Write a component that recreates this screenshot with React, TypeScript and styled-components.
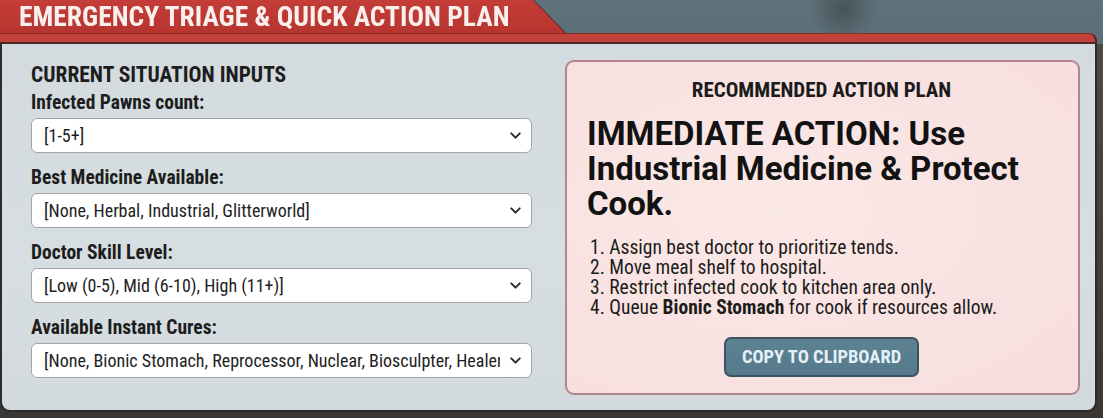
import React from "react";
import styled, { createGlobalStyle } from "styled-components";
import { ChevronDown } from "lucide-react";

const Global = createGlobalStyle`
  html, body { margin: 0; padding: 0; }
  body {
    width: 1103px;
    height: 418px;
    overflow: hidden;
    background: #3b3734;
    font-family: "Roboto Condensed", "Liberation Sans Narrow", sans-serif;
  }
`;

const narrow = `"Roboto Condensed", "Liberation Sans Narrow", "DejaVu Sans Condensed", sans-serif`;

const Page = styled.div`
  width: 1103px;
  height: 418px;
  display: flex;
  flex-direction: column;
  background:
    radial-gradient(ellipse 34px 34px at 843px 8px, rgba(45, 55, 60, 0.5), rgba(45, 55, 60, 0) 100%),
    linear-gradient(180deg, #5f7179 0px, #5c6e76 44px, #4b4a47 44px, #3b3734 418px);
`;

const Header = styled.div`
  width: 1097px;
  display: flex;
  flex-direction: column;
`;

const TabWrap = styled.div`
  height: 33px;
  filter: drop-shadow(1.5px 0 0 #4b2424);
`;

const Tab = styled.div`
  width: 566px;
  height: 33px;
  background: linear-gradient(180deg, #c43d38 0%, #b6342f 100%);
  clip-path: polygon(0 0, 533px 0, 565px 33px, 0 33px);
  display: flex;
  align-items: center;
  padding-left: 19px;
  box-sizing: border-box;
`;

const Title = styled.h1`
  margin: 0;
  font-family: ${narrow};
  font-weight: 700;
  font-size: 27.5px;
  line-height: 32px;
  color: #fbefed;
`;

const Strip = styled.div`
  height: 8px;
  background: #c1413b;
  border-top: 1px solid #8a2c2a;
  border-bottom: 2px solid #4e2826;
  border-right: 2px solid #4e2826;
  border-top-right-radius: 8px;
`;

const Body = styled.div`
  width: 1097px;
  height: 368px;
  box-sizing: border-box;
  background: linear-gradient(180deg, #d3dbde 0%, #d6dee1 60%, #d2dadd 100%);
  border-left: 2px solid #2e2b29;
  border-right: 2px solid #2e2b29;
  border-bottom: 2px solid #2e2b29;
  border-bottom-left-radius: 10px;
  border-bottom-right-radius: 10px;
  display: grid;
  grid-template-columns: 501px 515px;
  column-gap: 33px;
  padding: 16px 0 0 29px;
`;

const Inputs = styled.section`
  display: flex;
  flex-direction: column;
  padding-top: 3px;
`;

const SectionTitle = styled.h2`
  margin: 0 0 5px;
  font-family: ${narrow};
  font-weight: 700;
  font-size: 21.5px;
  line-height: 24px;
  color: #1d1d1d;
`;

const Fields = styled.div`
  display: flex;
  flex-direction: column;
  gap: 14px;
`;

const Field = styled.label`
  display: flex;
  flex-direction: column;
  gap: 4px;
`;

const LabelText = styled.span`
  font-family: ${narrow};
  font-weight: 700;
  font-size: 19.5px;
  line-height: 22px;
  color: #1d1d1d;
`;

const SelectWrap = styled.div`
  position: relative;
  height: 35px;
`;

const Select = styled.select`
  appearance: none;
  width: 100%;
  height: 35px;
  box-sizing: border-box;
  border: 1.5px solid #a3a6a8;
  border-radius: 6px;
  background: #ffffff;
  padding: 0 31px 0 12px;
  font-family: ${narrow};
  font-size: 18px;
  color: #1e1e1e;
  outline: none;
`;

const Chevron = styled(ChevronDown)`
  position: absolute;
  right: 8px;
  top: 9px;
  pointer-events: none;
  color: #2c2c2c;
`;

const Plan = styled.section`
  height: 335px;
  box-sizing: border-box;
  border: 2px solid #b3858a;
  border-radius: 9px;
  background: radial-gradient(ellipse at 40% 45%, #fbe9e7 0%, #f8e2e1 60%, #f6dedd 100%);
  display: flex;
  flex-direction: column;
  padding: 16px 22px 0 20px;
`;

const PlanTitle = styled.h3`
  margin: 0;
  text-align: center;
  font-family: ${narrow};
  font-weight: 700;
  font-size: 21px;
  line-height: 24px;
  color: #1b1b1b;
`;

const Headline = styled.p`
  margin: 14px 0 0;
  font-family: "Roboto", "Liberation Sans", sans-serif;
  font-weight: 700;
  font-size: 33px;
  line-height: 35px;
  color: #121212;
`;

const Steps = styled.ol`
  margin: 17px 0 0;
  padding: 0 0 0 3px;
  list-style: none;
  counter-reset: step;
  font-family: ${narrow};
  font-size: 19.5px;
  line-height: 20px;
  color: #1c1c1c;
`;

const Step = styled.li`
  counter-increment: step;
  &::before {
    content: counter(step) ". ";
  }
  b { font-weight: 700; }
`;

const ButtonRow = styled.div`
  display: flex;
  justify-content: center;
  margin-top: 19px;
`;

const CopyButton = styled.button`
  width: 195px;
  height: 40px;
  box-sizing: border-box;
  border: 2px solid #3b5361;
  border-radius: 7px;
  background: linear-gradient(180deg, #5d8294 0%, #557a8c 100%);
  color: #e4f0f6;
  font-family: ${narrow};
  font-weight: 700;
  font-size: 18.5px;
  cursor: pointer;
`;

const fields = [
  { label: "Infected Pawns count:", value: "[1-5+]" },
  { label: "Best Medicine Available:", value: "[None, Herbal, Industrial, Glitterworld]" },
  { label: "Doctor Skill Level:", value: "[Low (0-5), Mid (6-10), High (11+)]" },
  {
    label: "Available Instant Cures:",
    value: "[None, Bionic Stomach, Reprocessor, Nuclear, Biosculpter, Healer Mech Serum]",
  },
];

export default function App() {
  return (
    <>
      <Global />
      <Page>
        <Header>
          <TabWrap>
            <Tab>
              <Title>EMERGENCY TRIAGE &amp; QUICK ACTION PLAN</Title>
            </Tab>
          </TabWrap>
          <Strip />
        </Header>
        <Body>
          <Inputs>
            <SectionTitle>CURRENT SITUATION INPUTS</SectionTitle>
            <Fields>
              {fields.map((f) => (
                <Field key={f.label}>
                  <LabelText>{f.label}</LabelText>
                  <SelectWrap>
                    <Select defaultValue={f.value}>
                      <option value={f.value}>{f.value}</option>
                    </Select>
                    <Chevron size={17} strokeWidth={2.8} />
                  </SelectWrap>
                </Field>
              ))}
            </Fields>
          </Inputs>
          <Plan>
            <PlanTitle>RECOMMENDED ACTION PLAN</PlanTitle>
            <Headline>IMMEDIATE ACTION: Use Industrial Medicine &amp; Protect Cook.</Headline>
            <Steps>
              <Step>Assign best doctor to prioritize tends.</Step>
              <Step>Move meal shelf to hospital.</Step>
              <Step>Restrict infected cook to kitchen area only.</Step>
              <Step>
                Queue <b>Bionic Stomach</b> for cook if resources allow.
              </Step>
            </Steps>
            <ButtonRow>
              <CopyButton>COPY TO CLIPBOARD</CopyButton>
            </ButtonRow>
          </Plan>
        </Body>
      </Page>
    </>
  );
}
